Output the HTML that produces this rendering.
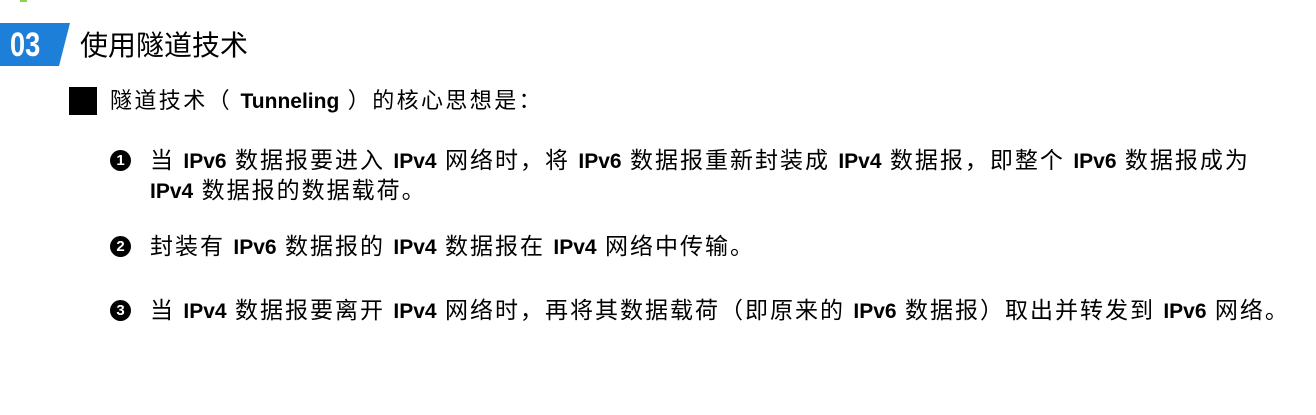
<!DOCTYPE html>
<html><head><meta charset="utf-8"><style>
body{margin:0;width:1316px;height:415px;background:#fff;position:relative;overflow:hidden;font-family:"Liberation Sans","Noto Sans CJK SC",sans-serif;color:#000}
.l{position:absolute;white-space:nowrap;font-size:23px;line-height:26px;letter-spacing:2px}
b{font-family:"Liberation Sans Narrow","Liberation Sans",sans-serif;font-weight:bold;font-size:21px;letter-spacing:0}
.n{position:absolute;left:110px;width:21px;height:21px;border-radius:50%;background:#000;color:#fff;font:bold 15px/21px "Liberation Sans",sans-serif;text-align:center;letter-spacing:0}
</style></head><body>
<div style="position:absolute;left:20px;top:0;width:7px;height:2px;background:#8bd34a"></div>
<svg style="position:absolute;left:0;top:23px" width="72" height="44"><polygon points="0,0 70,0 59,43 0,43" fill="#1e7fd8"/></svg>
<div style="position:absolute;left:10px;top:28px;color:#fff;font:bold 34px/34px 'Liberation Sans Narrow','Liberation Sans',sans-serif;transform:scaleX(0.8);transform-origin:left">03</div>
<div class="l" style="left:80px;top:30px;font-size:28px;line-height:32px;letter-spacing:0">使用隧道技术</div>
<div style="position:absolute;left:69px;top:87px;width:28px;height:28px;background:#000"></div>
<div class="l" style="left:110px;top:88px;font-size:22px;letter-spacing:2.4px">隧道技术（ <b>Tunneling</b> ）的核心思想是：</div>
<div class="n" style="top:150px">1</div>
<div class="l" style="left:150px;top:147px">当 <b>IPv6</b> 数据报要进入 <b>IPv4</b> 网络时，将 <b>IPv6</b> 数据报重新封装成 <b>IPv4</b> 数据报，即整个 <b>IPv6</b> 数据报成为</div>
<div class="l" style="left:150px;top:177px"><b>IPv4</b> 数据报的数据载荷。</div>
<div class="n" style="top:236px">2</div>
<div class="l" style="left:150px;top:233px">封装有 <b>IPv6</b> 数据报的 <b>IPv4</b> 数据报在 <b>IPv4</b> 网络中传输。</div>
<div class="n" style="top:300px">3</div>
<div class="l" style="left:150px;top:297px">当 <b>IPv4</b> 数据报要离开 <b>IPv4</b> 网络时，再将其数据载荷（即原来的 <b>IPv6</b> 数据报）取出并转发到 <b>IPv6</b> 网络。</div>
</body></html>
